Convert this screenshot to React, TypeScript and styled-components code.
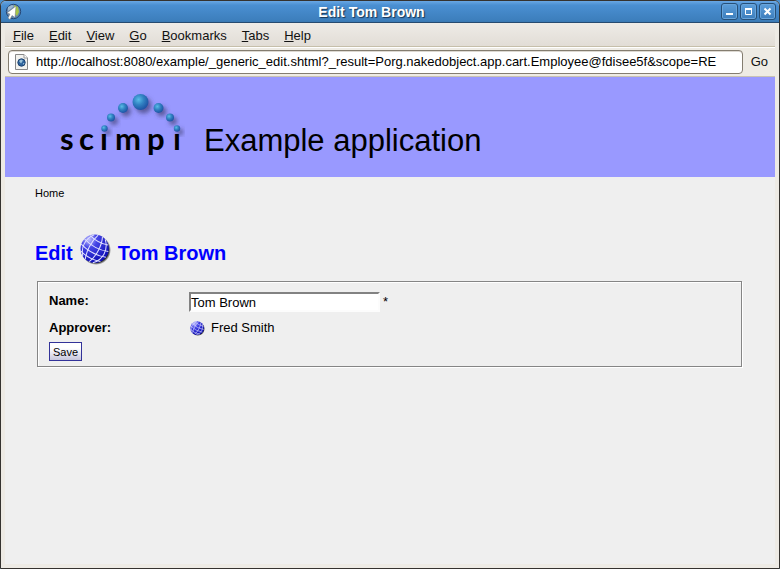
import React from "react";
import styled, { createGlobalStyle } from "styled-components";

const GlobalStyle = createGlobalStyle`
  * { box-sizing: border-box; }
  body { margin: 0; background: #4a90d0; font-family: "Liberation Sans", Arial, sans-serif; font-size: 13px; color: #000; }
`;

const Window = styled.div`
  display: flex;
  flex-direction: column;
  min-height: 100vh;
  border: 1px solid #35322f;
  border-radius: 6px 6px 0 0;
  background: #edeae4;
  overflow: hidden;
`;

const TitleBar = styled.header`
  display: flex;
  align-items: center;
  height: 22px;
  padding: 0 3px 0 4px;
  background: linear-gradient(#69a7e4, #4a8fd2 20%, #3d7fbd 90%, #3a78b2);
  border-bottom: 1px solid #264a70;
`;

const WindowTitle = styled.div`
  flex: 1;
  text-align: center;
  font-size: 14px;
  font-weight: bold;
  line-height: 20px;
  color: #fff;
  text-shadow: 1px 1px 1px #173453;
`;

const WindowButtons = styled.div`
  display: flex;
  gap: 2px;
`;

const WindowButton = styled.button`
  display: flex;
  align-items: center;
  justify-content: center;
  width: 17px;
  height: 17px;
  padding: 0;
  border: 1px solid #265079;
  border-radius: 3px;
  background: linear-gradient(#5c9eda, #3c7dbc);
  box-shadow: inset 0 0 0 1px #68a4db;
`;

const MenuBar = styled.nav`
  display: flex;
  align-items: center;
  gap: 15px;
  height: 24px;
  margin: 0 4px;
  padding: 2px 8px 0;
  background: linear-gradient(#eeebe7, #e2ddd6);
  border-bottom: 1px solid #c6bfaa;
`;

const MenuItem = styled.button`
  padding: 0;
  border: 0;
  background: none;
  font: 13px/18px "Liberation Sans", Arial, sans-serif;
  color: #111;
`;

const AddressBar = styled.form`
  display: flex;
  align-items: center;
  gap: 8px;
  height: 30px;
  margin: 0 4px;
  padding: 0 7px 0 3px;
  background: #eeebe4;
  border-top: 1px solid #fff;
  border-bottom: 1px solid #c8c2b4;
`;

const AddressField = styled.label`
  display: flex;
  flex: 1;
  align-items: center;
  gap: 8px;
  min-width: 0;
  height: 24px;
  padding: 0 1px 0 6px;
  border: 1px solid #847d70;
  border-radius: 4px;
  background: #fff;
  box-shadow: inset 0 1px 0 #ddd9d2;
`;

const AddressInput = styled.input`
  flex: 1;
  min-width: 0;
  padding: 0;
  border: 0;
  outline: 0;
  background: none;
  font: 13px/20px "Liberation Sans", Arial, sans-serif;
  color: #000;
`;

const GoButton = styled(MenuItem)``;

const Page = styled.main`
  flex: 1;
  margin: 0 4px 4px;
  background: #efefef;
`;

const Banner = styled.div`
  display: flex;
  height: 100px;
  padding: 15px 0 0 50px;
  background: #9999ff;
`;

const BannerTitle = styled.div`
  padding: 31px 0 0 18px;
  font-size: 31px;
  line-height: 36px;
`;

const Content = styled.div`
  padding: 8px 33px 32px 30px;
`;

const HomeLink = styled.a`
  font-size: 11px;
  line-height: 16px;
  color: #000;
  text-decoration: none;
`;

const Heading = styled.h1`
  display: flex;
  align-items: center;
  gap: 7px;
  margin: 32px 0 16px;
  font-size: 20px;
  line-height: 24px;
  color: #0000ff;
`;

const HeadingText = styled.span`
  padding-top: 8px;
`;

const Fields = styled.fieldset`
  display: grid;
  gap: 5px;
  margin: 0 0 0 2px;
  padding: 10px 11px 5px;
  border: 1px solid #858585;
  box-shadow: 1px 1px 0 #fff, inset 1px 1px 0 #fff;
`;

const Row = styled.div`
  display: flex;
  align-items: center;
`;

const InputRow = styled(Row)`
  align-items: flex-start;
  padding-bottom: 2px;
`;

const Label = styled.label`
  width: 140px;
  font-weight: bold;
  line-height: 18px;
`;

const NameInput = styled.input`
  width: 191px;
  height: 20px;
  margin-right: 3px;
  padding: 0;
  border: 2px solid;
  border-color: #828282 #fcfcfc #fcfcfc #828282;
  background: #fff;
  font: 13px/16px "Liberation Sans", Arial, sans-serif;
  color: #000;
`;

const RequiredMark = styled.span`
  line-height: 20px;
`;

const Approver = styled.output`
  display: flex;
  align-items: center;
  gap: 6px;
  padding-left: 1px;
  line-height: 18px;
`;

const SaveButton = styled.button`
  justify-self: start;
  height: 19px;
  padding: 0 3px;
  border: 1px solid #333399;
  background: linear-gradient(#fff 30%, #c6c6dc);
  font: 11px/16px "Liberation Sans", Arial, sans-serif;
  color: #000;
`;

function Globe({ size }: { size: number }) {
  const id = `globe${size}`;
  return (
    <svg width={size} height={size} viewBox="0 0 30 30" aria-hidden="true">
      <defs>
        <radialGradient id={id} cx="30%" cy="18%" r="80%">
          <stop offset="0" stopColor="#c0c0ff" />
          <stop offset=".35" stopColor="#4646e6" />
          <stop offset="1" stopColor="#1010b8" />
        </radialGradient>
        <radialGradient id={`${id}s`}>
          <stop offset=".84" stopColor="#111" stopOpacity=".9" />
          <stop offset="1" stopColor="#222" stopOpacity="0" />
        </radialGradient>
      </defs>
      <circle cx="15.500" cy="15.500" r="14.500" fill={`url(#${id}s)`} />
      <circle cx="14.200" cy="14.200" r="13.700" fill={`url(#${id})`} />
      <g transform="rotate(28 14.2 14.2)" fill="none" stroke="#e0e0ff" strokeWidth="1">
        <path d="M11 1C8 9 8 20 11 27.500M15.500.6C19 8 19 20 15.500 27.800M7.500 2.500C1.500 10 1.500 19 7.500 26M19 1.500C26.500 9 26.500 20 19 27" />
        <path d="M4.500 5q9.700 3 19.400 0M1.200 10.500q13 4.500 26 0M.7 16.500q13.500 4.500 27 0M3.500 22.500q10.700 3.500 21.400 0" />
      </g>
    </svg>
  );
}

const spheres = [
  [85.500, 10, 8], [68, 16, 5], [103.500, 16, 5], [56, 25.500, 4],
  [115, 25.500, 4], [49.500, 36.500, 3.200], [122, 36.500, 3.200],
];

const letters: [string, number][] = [
  ["s", 5], ["c", 24], ["ı", 45], ["m", 60], ["p", 92], ["ı", 118],
];

function Logo() {
  return (
    <svg width="131" height="72" viewBox="0 0 131 72" role="img" aria-label="scimpi">
      <defs>
        <radialGradient id="sphere" cx="38%" cy="35%" r="65%">
          <stop offset="0" stopColor="#5abce8" />
          <stop offset=".5" stopColor="#3182c2" />
          <stop offset="1" stopColor="#2054a6" />
        </radialGradient>
        <filter id="shade" x="-50%" y="-50%" width="220%" height="220%">
          <feDropShadow dx="3" dy="3.500" stdDeviation="2" floodColor="#39396b" floodOpacity=".65" />
        </filter>
      </defs>
      {spheres.map(([x, y, r]) => (
        <circle key={x} cx={x} cy={y} r={r} fill="url(#sphere)" filter="url(#shade)" />
      ))}
      <g fontFamily="Lato, sans-serif" fontWeight="700" fontSize="31">
        {letters.map(([letter, x]) => (
          <text key={x} x={x} y="58">{letter}</text>
        ))}
      </g>
    </svg>
  );
}

function BrowserIcon() {
  return (
    <svg width="17" height="18" viewBox="0 0 17 18" aria-hidden="true">
      <circle cx="8.500" cy="8.500" r="7.200" fill="#6087b0" stroke="#264876" />
      <path d="M9 2l4 2 1 5-2 4-3-3z" fill="#a5c54a" />
      <path d="M3 4l4-2 2 1-3 3-3 2z" fill="#9eb7cd" />
      <path d="M11 3L2 10l3 1-2 4 2 1.500 2-4 3 2z" fill="#fff" stroke="#777" strokeWidth=".5" />
    </svg>
  );
}

function PageIcon() {
  return (
    <svg width="13" height="16" viewBox="0 0 13 16" aria-hidden="true">
      <path d="M.5.5h8.500l3.500 3.500v11.500H.5z" fill="#f2f2ef" stroke="#888" />
      <path d="M9 .5V4h3.500" fill="#fff" stroke="#999" />
      <circle cx="6.500" cy="8.500" r="3.700" fill="#2e649d" stroke="#1e4371" />
      <path d="M4 7l2-1.500 2 1-2 3zM8 9l1.500 0-1 2z" fill="#9bc3da" />
    </svg>
  );
}

const menus = ["File", "Edit", "View", "Go", "Bookmarks", "Tabs", "Help"];

export default function App() {
  return (
    <>
      <GlobalStyle />
      <Window>
        <TitleBar>
          <BrowserIcon />
          <WindowTitle>Edit Tom Brown</WindowTitle>
          <WindowButtons>
            <WindowButton aria-label="Minimize">
              <svg width="9" height="9"><path d="M1 7h7" stroke="#fff" strokeWidth="2" /></svg>
            </WindowButton>
            <WindowButton aria-label="Maximize">
              <svg width="9" height="9"><path d="M1.500 2v5.500h6V2" fill="none" stroke="#fff" /><path d="M1 2h7" stroke="#fff" strokeWidth="2" /></svg>
            </WindowButton>
            <WindowButton aria-label="Close">
              <svg width="9" height="9"><path d="M1.500 1.500l6 6M7.500 1.500l-6 6" stroke="#fff" strokeWidth="2" /></svg>
            </WindowButton>
          </WindowButtons>
        </TitleBar>
        <MenuBar>
          {menus.map((name) => (
            <MenuItem key={name}><u>{name[0]}</u>{name.slice(1)}</MenuItem>
          ))}
        </MenuBar>
        <AddressBar onSubmit={(event) => event.preventDefault()}>
          <AddressField>
            <PageIcon />
            <AddressInput
              aria-label="Address"
              defaultValue="http://localhost:8080/example/_generic_edit.shtml?_result=Porg.nakedobject.app.cart.Employee@fdisee5f&scope=RE"
            />
          </AddressField>
          <GoButton>Go</GoButton>
        </AddressBar>
        <Page>
          <Banner>
            <Logo />
            <BannerTitle>Example application</BannerTitle>
          </Banner>
          <Content>
            <HomeLink href="#">Home</HomeLink>
            <Heading>
              <HeadingText>Edit</HeadingText>
              <Globe size={31} />
              <HeadingText>Tom Brown</HeadingText>
            </Heading>
            <form onSubmit={(event) => event.preventDefault()}>
              <Fields>
                <InputRow>
                  <Label htmlFor="name">Name:</Label>
                  <NameInput id="name" defaultValue="Tom Brown" />
                  <RequiredMark>*</RequiredMark>
                </InputRow>
                <Row>
                  <Label htmlFor="approver">Approver:</Label>
                  <Approver id="approver"><Globe size={15} />Fred Smith</Approver>
                </Row>
                <SaveButton>Save</SaveButton>
              </Fields>
            </form>
          </Content>
        </Page>
      </Window>
    </>
  );
}
